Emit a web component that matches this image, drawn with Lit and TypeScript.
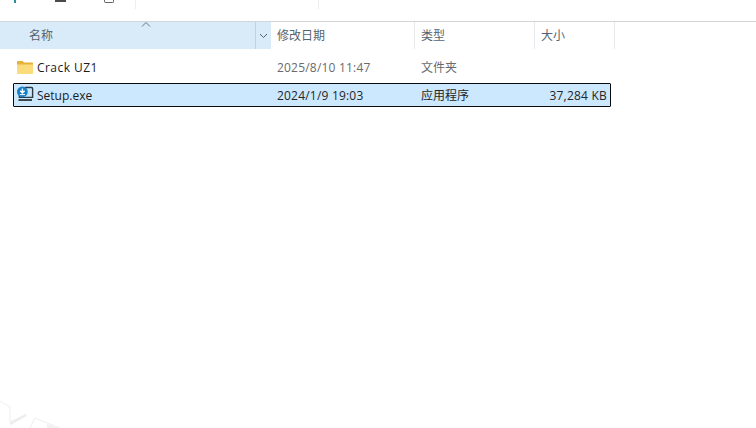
import { LitElement, html, css, svg } from "lit";
import { customElement } from "lit/decorators.js";

const folderIcon = svg`<svg width="18" height="16" viewBox="0 0 18 16">
  <path d="M1 3C1 2.4 1.4 2 2 2H6.4L8.4 3.6H16C16.6 3.6 17 4 17 4.6V6H1Z" fill="#e6b23c"/>
  <path d="M1 5.4H17V14.2C17 14.7 16.7 15 16.2 15H1.8C1.3 15 1 14.7 1 14.2Z" fill="#fbdc7c"/>
</svg>`;

const setupIcon = svg`<svg width="18" height="16" viewBox="0 0 18 16">
  <path d="M9 1.5H15.6C16.2 1.5 16.6 1.9 16.6 2.5V11.4H3.4V9" fill="none" stroke="#2b3a42" stroke-width="1.4"/>
  <rect x="2.5" y="13" width="13.5" height="2" fill="#3c474d"/>
  <circle cx="6.4" cy="5.8" r="5.4" fill="#1481c6"/>
  <path d="M6.4 2.6V6.8M4.2 4.8L6.4 7L8.6 4.8" fill="none" stroke="#fff" stroke-width="1.4"/>
  <path d="M3.8 8.6H9" stroke="#fff" stroke-width="1"/>
</svg>`;

@customElement("app-root")
export class AppRoot extends LitElement {
  static styles = css`
    :host {
      display: block;
      position: relative;
      width: 756px;
      height: 428px;
      overflow: hidden;
      background: #fff;
      font-family: "Segoe UI", "Open Sans", "Noto Sans", "Noto Sans CJK SC", sans-serif;
      font-size: 12px;
      color: #1f1f1f;
    }
    .toolbar {
      height: 22px;
      box-sizing: border-box;
      border-bottom: 1px solid #d3d6d8;
      display: flex;
      align-items: flex-start;
    }
    .tool-a { width: 2px; height: 3px; margin-left: 14px; background: #2e8f9c; }
    .tool-b { width: 11px; height: 2px; margin-left: 39px; background: #4a4a4a; }
    .tool-c {
      width: 10px; height: 3px; margin-left: 38px; box-sizing: border-box;
      border: 1px solid #666; border-top: 0; border-radius: 0 0 2px 2px;
    }
    .tool-sep { width: 1px; height: 9px; background: #eeeeee; }
    .tool-sep.one { margin-left: 21px; }
    .tool-sep.two { margin-left: 182px; }
    .header {
      display: flex;
      height: 27px;
    }
    .head-name {
      width: 271px;
      display: flex;
      background: #d9ebf9;
      position: relative;
    }
    .head-label { padding-left: 29px; line-height: 28px; flex: 1; color: #56636f; }
    .caret { position: absolute; left: 141px; top: -1px; }
    .chev {
      width: 15px;
      border-left: 1px solid #bcd3e6;
      display: flex;
      align-items: center;
      justify-content: center;
      background: #d9ebf9;
    }
    .head-col {
      line-height: 28px;
      box-sizing: border-box;
      padding-left: 6px;
      border-right: 1px solid #e7eaec;
      color: #56636f;
    }
    .w-date { width: 144px; }
    .w-type { width: 120px; }
    .w-size { width: 80px; }
    .rows { display: flex; flex-direction: column; padding: 6px 0 0 13px; gap: 4px; }
    .row {
      width: 598px;
      height: 24px;
      box-sizing: border-box;
      display: flex;
      align-items: center;
      color: #6a6a6a;
    }
    .row.selected {
      border: 1px solid #0c0c0c;
      border-radius: 1px;
      background: #cce8ff;
      color: #262626;
    }
    .icon { width: 24px; display: flex; justify-content: center; flex: none; }
    .name { width: 240px; color: #1c1c1c; flex: none; }
    .name.wide { letter-spacing: 0.45px; }
    .date { width: 144px; flex: none; letter-spacing: 0.2px; }
    .type { width: 100px; flex: none; }
    .size { flex: 1; text-align: right; padding-right: 3px; letter-spacing: 0.22px; }
    .selected .icon { margin-left: -1px; margin-bottom: 3px; }
    .watermark { position: absolute; left: 0; bottom: 0; }
  `;

  render() {
    return html`
      <div class="toolbar">
        <div class="tool-a"></div><div class="tool-b"></div><div class="tool-c"></div>
        <div class="tool-sep one"></div><div class="tool-sep two"></div>
      </div>
      <div class="header">
        <div class="head-name">
          <div class="head-label">名称</div>
          <svg class="caret" width="10" height="7" viewBox="0 0 10 7"><path d="M1 5.5L5 1.5L9 5.5" fill="none" stroke="#6a7680" stroke-width="1"/></svg>
          <div class="chev"><svg width="9" height="6" viewBox="0 0 9 6"><path d="M1 1L4.5 4.5L8 1" fill="none" stroke="#55626e" stroke-width="1"/></svg></div>
        </div>
        <div class="head-col w-date">修改日期</div>
        <div class="head-col w-type">类型</div>
        <div class="head-col w-size">大小</div>
      </div>
      <div class="rows">
        <div class="row">
          <div class="icon">${folderIcon}</div>
          <div class="name wide">Crack UZ1</div>
          <div class="date">2025/8/10 11:47</div>
          <div class="type">文件夹</div>
          <div class="size"></div>
        </div>
        <div class="row selected">
          <div class="icon">${setupIcon}</div>
          <div class="name">Setup.exe</div>
          <div class="date">2024/1/9 19:03</div>
          <div class="type">应用程序</div>
          <div class="size">37,284 KB</div>
        </div>
      </div>
      <svg class="watermark" width="120" height="40" viewBox="0 0 120 40">
        <g fill="none" stroke="#eeeeee" stroke-width="1">
          <path d="M0 13L10 19V34L26 27"/>
          <path d="M30 40L35 30L60 40"/>
        </g>
        <path d="M10 36L26 27" stroke="#ececec" stroke-width="2.5" fill="none"/>
        <path d="M47 36L58 40H47Z" fill="#f0f0f0"/>
      </svg>
    `;
  }
}
